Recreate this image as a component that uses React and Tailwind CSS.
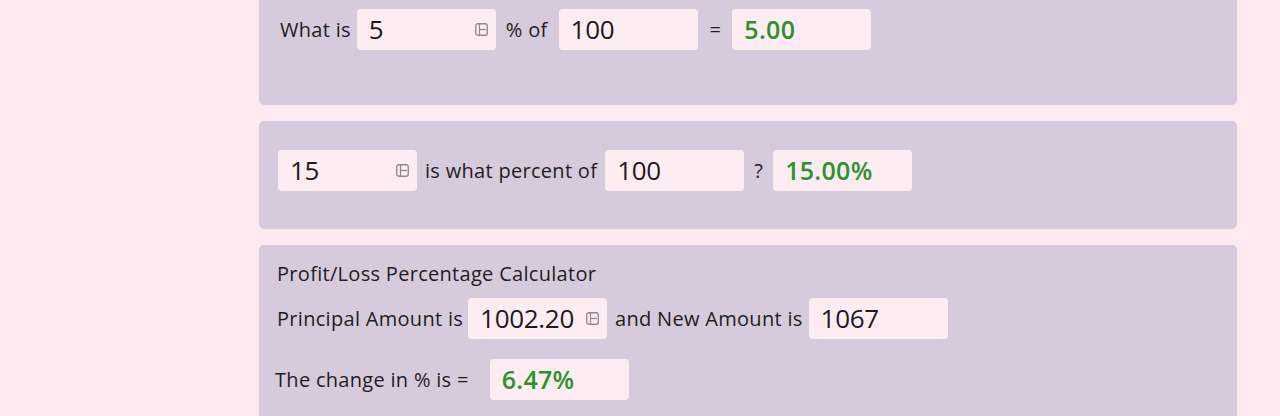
import React from 'react'

function Spin() {
  return (
    <svg width="13" height="13" viewBox="0 0 13 13" className="shrink-0">
      <rect x="0.75" y="0.75" width="11.5" height="11.5" rx="2" fill="none" stroke="#8b8790" strokeWidth="1.3" />
      <line x1="4.5" y1="1" x2="4.5" y2="12" stroke="#8b8790" strokeWidth="1.2" />
      <line x1="4.5" y1="6.5" x2="11" y2="6.5" stroke="#8b8790" strokeWidth="1.2" />
    </svg>
  )
}

function Field({ value, spin }) {
  return (
    <div className="flex items-center justify-between h-[41px] w-[139px] shrink-0 rounded-[4px] bg-[#fdedf2] pl-3 pr-2 text-[26px] tracking-[-0.3px] text-[#1c1a1e]">
      <span>{value}</span>
      {spin && <Spin />}
    </div>
  )
}

function Result({ value }) {
  return (
    <div className="flex items-center h-[41px] w-[139px] shrink-0 rounded-[4px] bg-[#fdedf2] pl-3 text-[25px] font-semibold text-[#2b922d]">
      {value}
    </div>
  )
}

export default function App() {
  return (
    <div className="h-[416px] overflow-hidden bg-[#fdeaf0] text-[20px] tracking-[0.3px] text-[#1f1c22]" style={{ fontFamily: '"Open Sans", "DejaVu Sans", sans-serif' }}>
      <div className="ml-[259px] w-[978px] -mt-[11px] flex flex-col gap-[16px]">
        {/* what is x % of y */}
        <div className="rounded-[5px] bg-[#d8cadd] pl-[21px] pt-[20px] pb-[55px]">
          <div className="flex items-center">
            <span className="mr-[6px]">What is</span>
            <Field value="5" spin />
            <span className="ml-[10px] mr-[11px]">% of</span>
            <Field value="100" />
            <span className="ml-[12px] mr-[11px]">=</span>
            <Result value="5.00" />
          </div>
        </div>

        {/* x is what percent of y */}
        <div className="rounded-[5px] bg-[#d8cadd] pl-[19px] pt-[29px] pb-[38px]">
          <div className="flex items-center">
            <Field value="15" spin />
            <span className="ml-[8px] mr-[8px]">is what percent of</span>
            <Field value="100" />
            <span className="ml-[10px] mr-[10px]">?</span>
            <Result value="15.00%" />
          </div>
        </div>

        {/* profit / loss */}
        <div className="rounded-[5px] bg-[#d8cadd] pl-[18px] pt-[15px] pb-[30px]">
          <div className="leading-[28px]">Profit/Loss Percentage Calculator</div>
          <div className="flex items-center mt-[10px]">
            <span className="mr-[5px]">Principal Amount is</span>
            <Field value="1002.20" spin />
            <span className="ml-[8px] mr-[6px]">and New Amount is</span>
            <Field value="1067" />
          </div>
          <div className="flex items-center mt-[20px]">
            <span className="-ml-[2px] mr-[21px]">The change in % is =</span>
            <Result value="6.47%" />
          </div>
        </div>
      </div>
    </div>
  )
}
